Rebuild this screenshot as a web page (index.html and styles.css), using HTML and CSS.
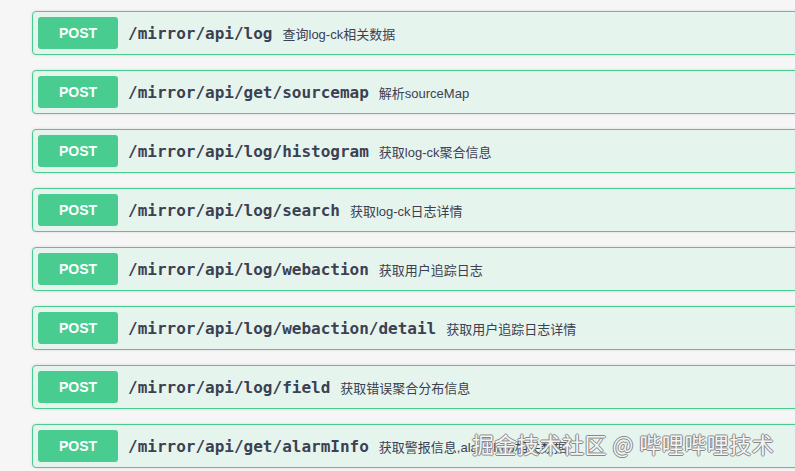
FILE: index.html
```html
<!DOCTYPE html>
<html lang="zh">
<head>
<meta charset="utf-8">
<title>mirror api</title>
<link rel="stylesheet" href="styles.css">
</head>
<body>
<div class="ops">
  <div class="op"><span class="method">POST</span><span class="path">/mirror/api/log</span><span class="desc">查询log-ck相关数据</span></div>
  <div class="op"><span class="method">POST</span><span class="path">/mirror/api/get/sourcemap</span><span class="desc">解析sourceMap</span></div>
  <div class="op"><span class="method">POST</span><span class="path">/mirror/api/log/histogram</span><span class="desc">获取log-ck聚合信息</span></div>
  <div class="op"><span class="method">POST</span><span class="path">/mirror/api/log/search</span><span class="desc">获取log-ck日志详情</span></div>
  <div class="op"><span class="method">POST</span><span class="path">/mirror/api/log/webaction</span><span class="desc">获取用户追踪日志</span></div>
  <div class="op"><span class="method">POST</span><span class="path">/mirror/api/log/webaction/detail</span><span class="desc">获取用户追踪日志详情</span></div>
  <div class="op"><span class="method">POST</span><span class="path">/mirror/api/log/field</span><span class="desc">获取错误聚合分布信息</span></div>
  <div class="op"><span class="method">POST</span><span class="path">/mirror/api/get/alarmInfo</span><span class="desc">获取警报信息,alarmInfo相关数据</span></div>
</div>
<div class="mark">掘金技术社区 @ 哔哩哔哩技术</div>
</body>
</html>
```
FILE: styles.css
```css
html, body {
  margin: 0;
  padding: 0;
  background: #f6f6f6;
  overflow: hidden;
  width: 795px;
  height: 471px;
}

body {
  position: relative;
  font-family: "Noto Sans CJK SC", "Liberation Sans", sans-serif;
  color: #3b4151;
}

.ops {
  display: flex;
  flex-direction: column;
  gap: 15px;
  padding: 11px 0 0 32px;
  width: 900px;
}

.op {
  display: flex;
  align-items: center;
  height: 42px;
  padding: 0 5px;
  border: 1px solid #49cc90;
  border-radius: 4px;
  background: #e6f4ee;
  box-shadow: 0 0 3px rgba(0, 0, 0, 0.12);
}

.method {
  flex: none;
  width: 80px;
  height: 32px;
  line-height: 32px;
  text-align: center;
  border-radius: 3px;
  background: #49cc90;
  color: #fff;
  font-family: "Liberation Sans", Arial, sans-serif;
  font-weight: 700;
  font-size: 14px;
}

.path {
  padding: 0 10px;
  font-family: "DejaVu Sans Mono", monospace;
  font-weight: 700;
  font-size: 16px;
  color: #3b4151;
}

.desc {
  font-family: "Liberation Sans", "Noto Sans CJK SC", sans-serif;
  font-size: 13px;
  color: #3b4151;
}

.mark {
  position: absolute;
  left: 472px;
  top: 428px;
  font-family: "Noto Sans CJK SC", sans-serif;
  font-size: 22px;
  line-height: 30px;
  color: #f4f4f4;
  letter-spacing: 0.5px;
  text-shadow: 1px 0 0 #888, -1px 0 0 #888, 0 1px 0 #888, 0 -1px 0 #888;
  white-space: nowrap;
}
```
